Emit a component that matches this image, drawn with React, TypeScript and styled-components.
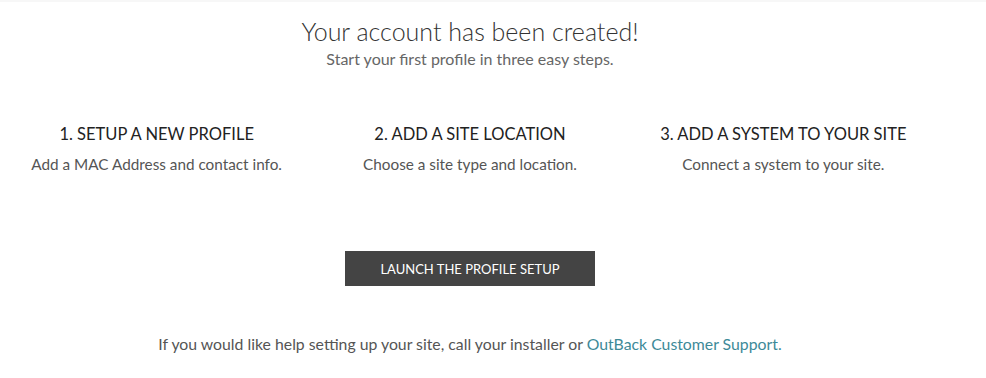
import styled, { createGlobalStyle } from 'styled-components';

const GlobalStyle = createGlobalStyle`
    body {
        margin: 0;
        background: #fff;
        font-family: 'Lato', 'Liberation Sans', sans-serif;
    }
`;

interface Step {
    title: string;
    text: string;
}

const steps: Step[] = [
    { title: '1. SETUP A NEW PROFILE', text: 'Add a MAC Address and contact info.' },
    { title: '2. ADD A SITE LOCATION', text: 'Choose a site type and location.' },
    { title: '3. ADD A SYSTEM TO YOUR SITE', text: 'Connect a system to your site.' },
];

const App: React.FC = () => {
    return (
        <>
            <GlobalStyle />
            <Page>
                <Container>
                    <Header>
                        <Title>Your account has been created!</Title>
                        <Subtitle>Start your first profile in three easy steps.</Subtitle>
                    </Header>
                    <Steps>
                        {steps.map((step) => (
                            <StepCol key={step.title}>
                                <StepTitle>{step.title}</StepTitle>
                                <StepText>{step.text}</StepText>
                            </StepCol>
                        ))}
                    </Steps>
                    <ButtonRow>
                        <LaunchButton>LAUNCH THE PROFILE SETUP</LaunchButton>
                    </ButtonRow>
                    <Help>
                        If you would like help setting up your site, call your installer or{' '}
                        <HelpLink href="#">OutBack Customer Support.</HelpLink>
                    </Help>
                </Container>
            </Page>
        </>
    );
};

export default App;

const Page = styled.div`
    width: 100%;
    height: 378px;
    border-top: 2px solid #f7f7f7;
    box-sizing: border-box;
`;

const Container = styled.div`
    width: 940px;
    display: flex;
    flex-direction: column;
    align-items: center;
`;

const Header = styled.div`
    display: flex;
    flex-direction: column;
    align-items: center;
    padding-top: 11px;
`;

const Title = styled.h1`
    margin: 0;
    font-size: 25px;
    font-weight: 300;
    color: #333;
    line-height: 36px;
`;

const Subtitle = styled.p`
    margin: 0;
    font-size: 16px;
    color: #666;
    line-height: 20px;
`;

const Steps = styled.div`
    width: 100%;
    display: grid;
    grid-template-columns: repeat(3, 1fr);
    margin-top: 53px;
`;

const StepCol = styled.div`
    display: flex;
    flex-direction: column;
    align-items: center;
    gap: 7px;
`;

const StepTitle = styled.h3`
    margin: 0;
    font-size: 16.5px;
    font-weight: 400;
    color: #222;
    line-height: 24px;
`;

const StepText = styled.p`
    margin: 0;
    font-size: 15.3px;
    color: #555;
    line-height: 22px;
`;

const ButtonRow = styled.div`
    margin-top: 76px;
`;

const LaunchButton = styled.button`
    width: 250px;
    height: 35px;
    border: none;
    background: #444;
    color: #fff;
    font-family: inherit;
    font-size: 13px;
    cursor: pointer;
`;

const Help = styled.p`
    margin: 48px 0 0;
    font-size: 15.8px;
    color: #555;
`;

const HelpLink = styled.a`
    color: #3d8a98;
    text-decoration: none;
`;
